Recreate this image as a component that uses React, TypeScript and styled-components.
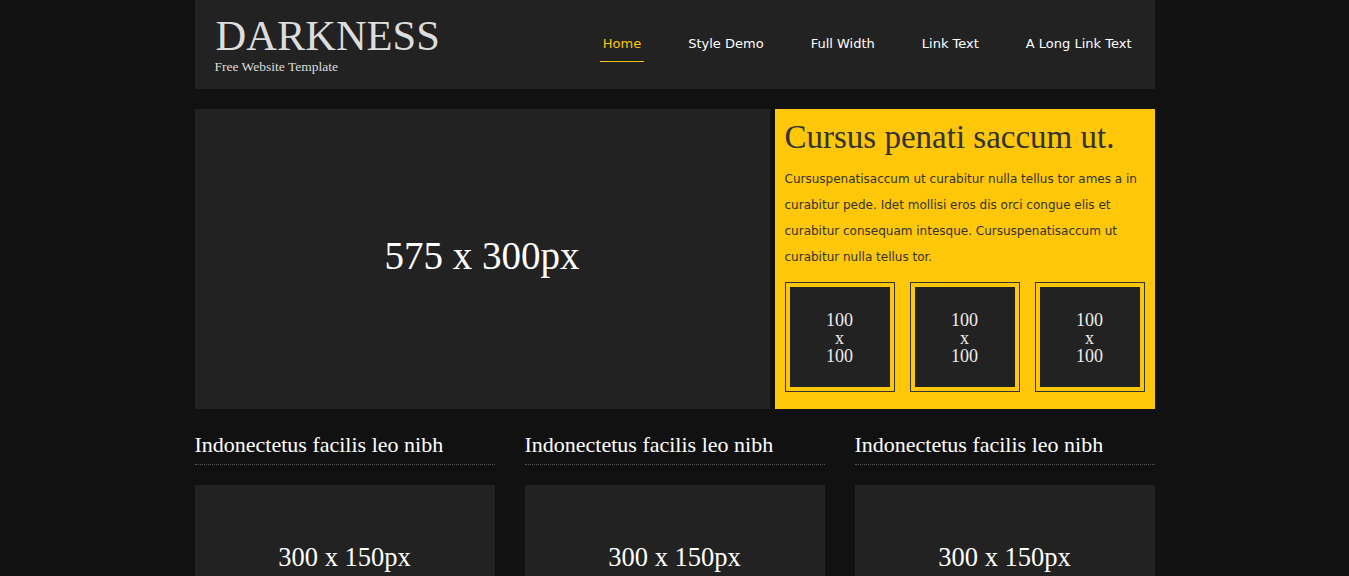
import React from "react";
import styled, { createGlobalStyle } from "styled-components";

const GlobalStyle = createGlobalStyle`
  html, body { margin: 0; padding: 0; background: #111111; }
  body { font-family: "DejaVu Sans", Verdana, sans-serif; }
  * { box-sizing: border-box; }
`;

const serif = `"Liberation Serif", Georgia, serif`;
const sans = `"DejaVu Sans", Verdana, sans-serif`;
const yellow = "#fec709";

const Page = styled.div`
  width: 960px;
  margin: 0 auto;
`;

const Header = styled.header`
  height: 89px;
  background: #222222;
  display: flex;
  align-items: stretch;
  justify-content: space-between;
  padding: 0 20px 0 21px;
`;

const Logo = styled.div`
  display: flex;
  flex-direction: column;
  padding-top: 14px;
`;

const Title = styled.h1`
  margin: 0;
  font-family: ${serif};
  font-weight: normal;
  font-size: 42.5px;
  line-height: 44px;
  color: #dddddd;
`;

const Subtitle = styled.div`
  font-family: ${serif};
  font-size: 13.5px;
  line-height: 16px;
  color: #dddddd;
  margin-top: 1px;
  margin-left: -1px;
`;

const Nav = styled.nav`
  display: flex;
  align-items: center;
  gap: 41px;
`;

const NavLink = styled.a<{ $active?: boolean }>`
  font-family: ${sans};
  font-size: 13px;
  color: ${(p) => (p.$active ? yellow : "#ffffff")};
  text-decoration: none;
  padding: 0 3px 3px;
  height: 89px;
  display: flex;
  align-items: center;
  position: relative;
  &::after {
    content: "";
    display: ${(p) => (p.$active ? "block" : "none")};
    position: absolute;
    left: 0;
    right: 0;
    top: 61px;
    height: 1px;
    background: ${yellow};
  }
`;

const Hero = styled.section`
  margin-top: 20px;
  height: 300px;
  display: flex;
  justify-content: space-between;
`;

const Placeholder = styled.div<{ $w: number; $h: number; $size: number; $lift: number }>`
  width: ${(p) => p.$w}px;
  height: ${(p) => p.$h}px;
  background: #222222;
  display: flex;
  align-items: center;
  justify-content: center;
  padding-bottom: ${(p) => p.$lift}px;
  font-family: ${serif};
  font-size: ${(p) => p.$size}px;
  color: #ffffff;
`;

const Feature = styled.div`
  width: 380px;
  background: ${yellow};
  padding: 10px;
  color: #333333;
`;

const FeatureTitle = styled.h2`
  margin: 0;
  font-family: ${serif};
  font-weight: normal;
  font-size: 33px;
  line-height: 36px;
  color: #333333;
`;

const FeatureText = styled.p`
  margin: 11px 0 0;
  font-family: ${sans};
  font-size: 12px;
  line-height: 26px;
  color: #333333;
`;

const Thumbs = styled.div`
  display: flex;
  gap: 15px;
  margin-top: 12px;
`;

const Thumb = styled.div`
  width: 110px;
  height: 110px;
  border: 1px solid #333333;
  padding: 4px;
`;

const ThumbInner = styled.div`
  width: 100px;
  height: 100px;
  background: #222222;
  display: flex;
  flex-direction: column;
  align-items: center;
  justify-content: center;
  padding-top: 2px;
  font-family: ${serif};
  font-size: 18px;
  line-height: 18px;
  color: #eeeeee;
  text-align: center;
`;

const Columns = styled.section`
  display: grid;
  grid-template-columns: repeat(3, 300px);
  gap: 30px;
  margin-top: 20px;
`;

const Column = styled.div`
  display: flex;
  flex-direction: column;
`;

const ColumnTitle = styled.h3`
  margin: 0 0 20px;
  padding: 1px 0 4px;
  font-family: ${serif};
  font-weight: normal;
  font-size: 22px;
  line-height: 30px;
  color: #ffffff;
  border-bottom: 1px dotted #555555;
`;

const navItems = ["Home", "Style Demo", "Full Width", "Link Text", "A Long Link Text"];

export default function App() {
  return (
    <>
      <GlobalStyle />
      <Page>
        <Header>
          <Logo>
            <Title>DARKNESS</Title>
            <Subtitle>Free Website Template</Subtitle>
          </Logo>
          <Nav>
            {navItems.map((n, i) => (
              <NavLink key={n} href="#" $active={i === 0}>
                {n}
              </NavLink>
            ))}
          </Nav>
        </Header>
        <Hero>
          <Placeholder $w={575} $h={300} $size={39} $lift={8}>
            575 x 300px
          </Placeholder>
          <Feature>
            <FeatureTitle>Cursus penati saccum ut.</FeatureTitle>
            <FeatureText>
              Cursuspenatisaccum ut curabitur nulla tellus tor ames a in curabitur pede. Idet mollisi eros dis orci
              congue elis et curabitur consequam intesque. Cursuspenatisaccum ut curabitur nulla tellus tor.
            </FeatureText>
            <Thumbs>
              {[0, 1, 2].map((i) => (
                <Thumb key={i}>
                  <ThumbInner>
                    <span>100</span>
                    <span>x</span>
                    <span>100</span>
                  </ThumbInner>
                </Thumb>
              ))}
            </Thumbs>
          </Feature>
        </Hero>
        <Columns>
          {[0, 1, 2].map((i) => (
            <Column key={i}>
              <ColumnTitle>Indonectetus facilis leo nibh</ColumnTitle>
              <Placeholder $w={300} $h={150} $size={26.5} $lift={6}>
                300 x 150px
              </Placeholder>
            </Column>
          ))}
        </Columns>
      </Page>
    </>
  );
}
